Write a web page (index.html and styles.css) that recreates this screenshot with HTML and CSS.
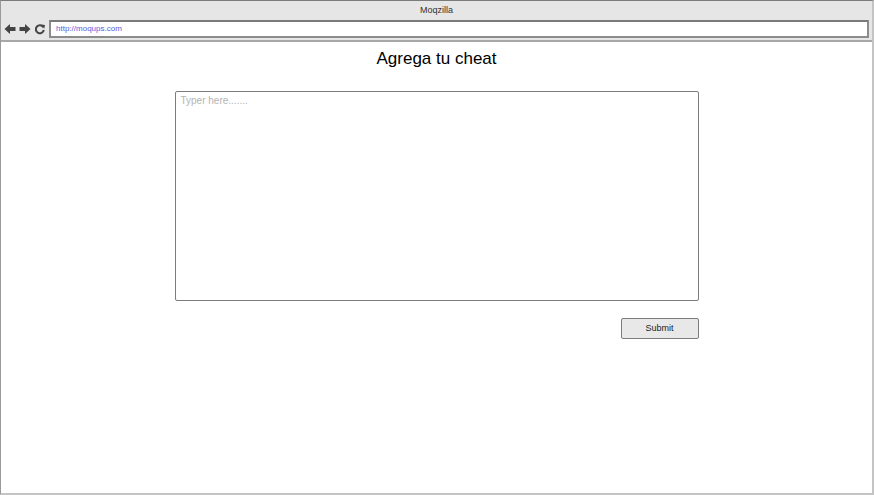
FILE: index.html
```html
<!DOCTYPE html>
<html>
<head>
<meta charset="utf-8">
<link rel="stylesheet" href="styles.css">
</head>
<body>
<div class="window">
  <div class="chrome">
    <div class="title">Moqzilla</div>
    <div class="navrow">
      <div class="navicons">
        <svg width="12" height="12" viewBox="0 0 12 12"><path d="M0.5 6 L6 1 L6 4 L11.5 4 L11.5 8 L6 8 L6 11 Z" fill="#444"/></svg>
        <svg width="12" height="12" viewBox="0 0 12 12"><path d="M11.5 6 L6 1 L6 4 L0.5 4 L0.5 8 L6 8 L6 11 Z" fill="#444"/></svg>
        <svg width="12" height="12" viewBox="0 0 12 12"><path d="M9.3 4.2 A4 4 0 1 0 9.8 7" fill="none" stroke="#444" stroke-width="2"/><path d="M7 1.5 L11 2 L10.2 5.8 Z" fill="#444"/></svg>
      </div>
      <div class="url">http://moqups.com</div>
    </div>
  </div>
  <div class="content">
    <h1 class="heading">Agrega tu cheat</h1>
    <div class="form">
      <div class="textarea">Typer here.......</div>
      <div class="actions">
        <div class="button">Submit</div>
      </div>
    </div>
  </div>
</div>
</body>
</html>
```
FILE: styles.css
```css
html, body {
  margin: 0;
  padding: 0;
  background: #ffffff;
}
body {
  font-family: "Liberation Sans", Arial, sans-serif;
}
.window {
  width: 874px;
  height: 495px;
  box-sizing: border-box;
  border-top: 1px solid #7a7a7a;
  border-left: 1px solid #9a9a9a;
  border-right: 2px solid #c4c4c4;
  border-bottom: 2px solid #c4c4c4;
  display: flex;
  flex-direction: column;
}
.chrome {
  background: #e6e6e6;
  height: 39px;
  border-bottom: 2px solid #a8a8a8;
  box-sizing: content-box;
  display: flex;
  flex-direction: column;
}
.title {
  height: 18px;
  line-height: 18px;
  text-align: center;
  font-size: 9px;
  color: #333333;
}
.navrow {
  display: flex;
  align-items: center;
  padding-left: 3px;
  gap: 3px;
  margin-top: 1px;
}
.navicons {
  display: flex;
  gap: 3px;
  align-items: center;
}
.navicons svg {
  display: block;
}
.url {
  flex: 1;
  margin-right: 3px;
  height: 14px;
  border: 2px solid #8c8c8c;
  border-top-color: #7a7a7a;
  background: #ffffff;
  font-size: 8px;
  line-height: 14px;
  color: #5b5bdc;
  padding-left: 5px;
}
.content {
  flex: 1;
  display: flex;
  flex-direction: column;
  align-items: center;
}
.heading {
  margin: 6px 0 0 0;
  font-size: 17px;
  font-weight: normal;
  line-height: 22px;
  color: #000000;
}
.form {
  margin-top: 21px;
  width: 524px;
  display: flex;
  flex-direction: column;
}
.textarea {
  height: 201px;
  border: 1px solid #7c7c7c;
  border-radius: 2px;
  font-size: 10px;
  color: #b4b4b4;
  padding: 3px 5px 4px 5px;
  box-sizing: content-box;
  width: 512px;
}
.actions {
  display: flex;
  justify-content: flex-end;
  margin-top: 17px;
}
.button {
  width: 76px;
  height: 19px;
  border: 1px solid #7c7c7c;
  border-radius: 2px;
  background: #e8e8e8;
  font-size: 9px;
  line-height: 19px;
  text-align: center;
  color: #222222;
}
```
